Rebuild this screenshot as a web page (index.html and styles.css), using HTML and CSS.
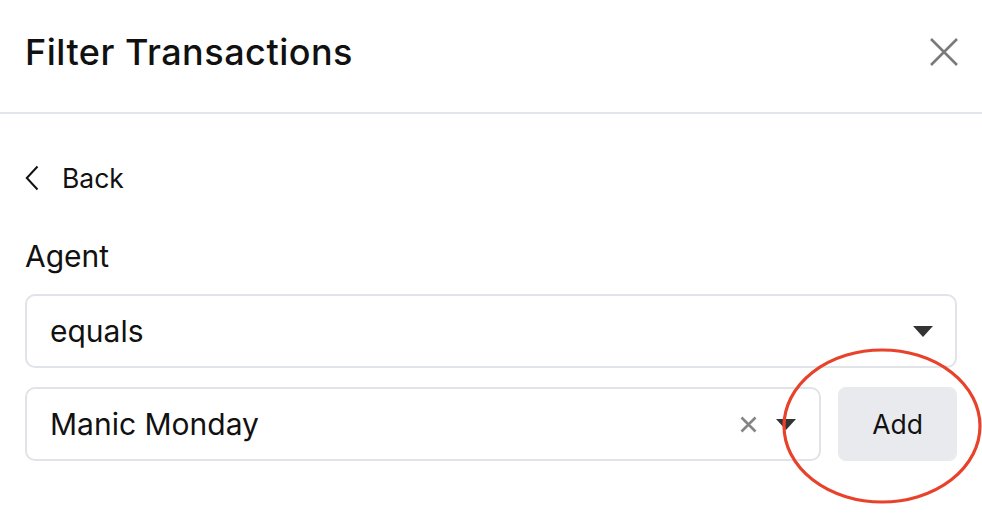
FILE: index.html
```html
<!DOCTYPE html>
<html lang="en">
<head>
<meta charset="utf-8">
<title>Filter Transactions</title>
<link rel="stylesheet" href="styles.css">
</head>
<body>
<div class="panel">
  <header class="header">
    <h1 class="title">Filter Transactions</h1>
    <button class="close" aria-label="Close">
      <svg width="30" height="30" viewBox="0 0 30 30"><path d="M2 2 L28 28 M28 2 L2 28" stroke="#7a7a7a" stroke-width="2.6" fill="none"/></svg>
    </button>
  </header>
  <main class="content">
    <div class="back">
      <svg class="chev" width="14" height="26" viewBox="0 0 14 26"><path d="M12.5 1.5 L1.8 13 L12.5 24.5" stroke="#111" stroke-width="2" fill="none"/></svg>
      <span>Back</span>
    </div>
    <div class="label">Agent</div>
    <div class="select">
      <span class="value">equals</span>
      <span class="caret"></span>
    </div>
    <div class="row">
      <div class="select grow">
        <span class="value">Manic Monday</span>
        <svg class="clear" width="17" height="17" viewBox="0 0 17 17"><path d="M1.5 1.5 L15.5 15.5 M15.5 1.5 L1.5 15.5" stroke="#858585" stroke-width="2.6" fill="none"/></svg>
        <span class="caret"></span>
      </div>
      <button class="add">Add</button>
      <svg class="circle" width="204" height="160" viewBox="0 0 204 160"><ellipse cx="101" cy="79" rx="98" ry="76" stroke="#e8422b" stroke-width="3.2" fill="none"/></svg>
    </div>
  </main>
</div>
</body>
</html>
```

FILE: styles.css
```css
* { box-sizing: border-box; }
html, body {
  margin: 0;
  padding: 0;
  background: #ffffff;
  font-family: Inter, "Noto Sans", "Liberation Sans", sans-serif;
  color: #111111;
  overflow: hidden;
}
.panel {
  width: 982px;
  height: 516px;
}
.header {
  height: 114px;
  border-bottom: 2px solid #e2e5e9;
  display: flex;
  align-items: center;
  justify-content: space-between;
  padding: 0 23px 8px 25px;
}
.title {
  margin: 0;
  font-size: 36px;
  font-weight: 500;
  letter-spacing: 0.5px;
  color: #111;
}
.close {
  border: 0;
  background: none;
  padding: 0;
  width: 30px;
  height: 30px;
  display: flex;
}
.content {
  padding: 50px 25px 0 25px;
}
.back {
  display: flex;
  align-items: center;
  gap: 23px;
  font-size: 26.5px;
  height: 28px;
}
.label {
  margin-top: 47px;
  font-size: 30px;
  height: 34px;
  line-height: 34px;
}
.select {
  margin-top: 21px;
  height: 74px;
  border: 2px solid #e0e3e7;
  border-radius: 10px;
  display: flex;
  align-items: center;
  padding: 0 22px 0 23px;
  font-size: 30px;
}
.value { flex: 1; }
.caret {
  width: 0;
  height: 0;
  border-left: 10px solid transparent;
  border-right: 10px solid transparent;
  border-top: 11px solid #333;
}
.row {
  position: relative;
  display: flex;
  gap: 17px;
  margin-top: 19px;
}
.row .select { margin-top: 0; padding-right: 23px; }
.grow { flex: 1; }
.clear { margin-right: 19px; }
.add {
  width: 119px;
  height: 74px;
  border: 0;
  border-radius: 8px;
  background: #e9eaee;
  font-family: inherit;
  font-size: 26.5px;
  color: #111;
}
.circle {
  position: absolute;
  left: 756px;
  top: -40px;
  pointer-events: none;
}
```
